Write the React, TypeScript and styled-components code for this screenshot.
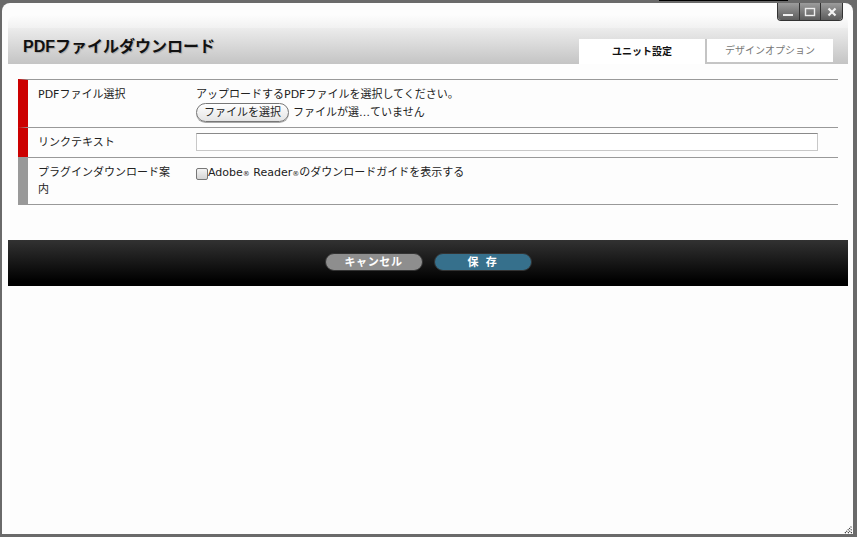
import styled, { createGlobalStyle } from "styled-components";

const GlobalStyle = createGlobalStyle`
  html, body {
    margin: 0;
    padding: 0;
    background: #6a6a6a;
  }
  * {
    box-sizing: border-box;
  }
`;

const Frame = styled.div`
  position: relative;
  width: 857px;
  height: 537px;
  padding: 3px 4px 3px 2px;
  background: #6a6a6a;
  overflow: hidden;
  font-family: "DejaVu Sans", "Noto Sans CJK JP", sans-serif;
  color: #222;
`;

const TopNotch = styled.div`
  position: absolute;
  top: 0;
  left: 659px;
  width: 129px;
  height: 1px;
  background: #000;
`;

const Dialog = styled.div`
  height: 100%;
  padding: 12px 5px 0 6px;
  background: #fdfdfd;
  border-radius: 8px 8px 0 0;
`;

const Sheet = styled.div`
  display: flex;
  flex-direction: column;
`;

const TopFade = styled.div`
  height: 13px;
  background: linear-gradient(#fdfdfd, #f1f1f1);
  border-radius: 8px 8px 0 0;
`;

const Header = styled.header`
  display: flex;
  justify-content: space-between;
  height: 36px;
  background: linear-gradient(#ececec, #c4c4c4);
`;

const Title = styled.h1`
  margin: 0;
  padding: 9px 0 0 15px;
  font-family: "Liberation Sans", "Noto Sans CJK JP", sans-serif;
  font-size: 16px;
  line-height: 20px;
  font-weight: 700;
  color: #111;
  text-shadow: 1px 1px 1px #aaa;
`;

const Tabs = styled.div`
  display: flex;
  align-items: flex-start;
  padding: 11px 15px 0 0;
`;

const Tab = styled.div<{ $active?: boolean }>`
  display: flex;
  align-items: center;
  justify-content: center;
  width: ${({ $active }) => ($active ? "128px" : "126px")};
  height: ${({ $active }) => ($active ? "25px" : "23px")};
  padding-bottom: 2px;
  background: #fff;
  border-right: ${({ $active }) => ($active ? "2px solid #c4c4c4" : "none")};
  font-size: 10px;
  font-weight: ${({ $active }) => ($active ? 700 : 400)};
  color: ${({ $active }) => ($active ? "#111" : "#777")};
`;

const Form = styled.div`
  margin: 15px 10px 0;
  border-bottom: 1px solid #999;
`;

const Row = styled.div<{ $required?: boolean; $height: number }>`
  display: grid;
  grid-template-columns: 158px 1fr;
  height: ${({ $height }) => $height}px;
  padding-left: 10px;
  border-top: 1px solid #999;
  border-left: 10px solid ${({ $required }) => ($required ? "#cc0000" : "#999")};
  font-size: 11px;
  line-height: 18px;
`;

const Label = styled.div`
  padding: 6px 20px 0 0;
  line-height: 17px;
`;

const Value = styled.div`
  display: flex;
  flex-direction: column;
  align-items: flex-start;
  padding-top: 6px;
`;

const FileLine = styled.div`
  display: flex;
  align-items: center;
  gap: 4px;
  margin-top: -1px;
`;

const FileButton = styled.button`
  width: 93px;
  height: 19px;
  padding: 0;
  border: 1px solid #777;
  border-radius: 10px;
  background: linear-gradient(#fff, #e4e4e4);
  box-shadow: 0 1px 0 #aaa;
  font: inherit;
  color: #222;
`;

const TextField = styled.input`
  display: block;
  width: 622px;
  height: 18px;
  margin-top: -1px;
  padding: 0 2px;
  border: 1px solid #c8c8c8;
  border-top-color: #8a8a8a;
  background: #fff;
`;

const CheckLine = styled.label`
  display: flex;
  align-items: center;
`;

const Check = styled.span`
  width: 12px;
  height: 12px;
  border: 1px solid #777;
  border-radius: 2px;
  background: linear-gradient(#f4f4f4, #d4d4d4);
`;

const Mark = styled.span`
  font-size: 7px;
`;

const Footer = styled.footer`
  display: flex;
  justify-content: center;
  align-items: center;
  gap: 11px;
  height: 46px;
  margin-top: 35px;
  padding-bottom: 2px;
  background: linear-gradient(#323232, #000 90%);
`;

const ActionButton = styled.button<{ $primary?: boolean }>`
  width: 98px;
  height: 18px;
  padding: 0;
  border: 1px solid #333;
  border-radius: 9px;
  background: ${({ $primary }) => ($primary ? "#36708c" : "#8e8e8e")};
  color: #fff;
  font-family: "Liberation Sans", "Noto Sans CJK JP", sans-serif;
  font-size: 11px;
  line-height: 16px;
  font-weight: 700;
  letter-spacing: 0.6px;
  word-spacing: 3px;
`;

const WindowControls = styled.div`
  position: absolute;
  top: 3px;
  left: 777px;
  display: flex;
  width: 66px;
  height: 18px;
  border: 1px solid #333;
  border-top: none;
  border-radius: 0 0 4px 4px;
  overflow: hidden;
`;

const WindowButton = styled.div`
  display: flex;
  flex: 1;
  align-items: center;
  justify-content: center;
  background: linear-gradient(#9c9c9c, #5c5c5c);
  border-left: 1px solid #333;

  &:first-child {
    border-left: none;
  }
`;

const Grip = styled.svg`
  position: absolute;
  right: 4px;
  bottom: 3px;
`;

function Minimize() {
  return (
    <svg width="12" height="12" viewBox="0 0 12 12">
      <rect x="1" y="8" width="10" height="2" fill="#eee" />
    </svg>
  );
}

function Maximize() {
  return (
    <svg width="12" height="12" viewBox="0 0 12 12">
      <rect x="1.5" y="2.5" width="9" height="7" fill="none" stroke="#eee" strokeWidth="1.4" />
    </svg>
  );
}

function Close() {
  return (
    <svg width="12" height="12" viewBox="0 0 12 12">
      <path d="M2.5 2.5 L9.5 9.5 M9.5 2.5 L2.5 9.5" stroke="#f2f2f2" strokeWidth="2.2" />
    </svg>
  );
}

export default function App() {
  return (
    <>
      <GlobalStyle />
      <Frame>
        <TopNotch />
        <Dialog>
          <Sheet>
            <TopFade />
            <Header>
              <Title>PDFファイルダウンロード</Title>
              <Tabs>
                <Tab $active>ユニット設定</Tab>
                <Tab>デザインオプション</Tab>
              </Tabs>
            </Header>
            <Form>
              <Row $required $height={48}>
                <Label>PDFファイル選択</Label>
                <Value>
                  アップロードするPDFファイルを選択してください。
                  <FileLine>
                    <FileButton type="button">ファイルを選択</FileButton>
                    ファイルが選…ていません
                  </FileLine>
                </Value>
              </Row>
              <Row $required $height={30}>
                <Label>リンクテキスト</Label>
                <Value>
                  <TextField type="text" />
                </Value>
              </Row>
              <Row $height={47}>
                <Label>プラグインダウンロード案内</Label>
                <Value>
                  <CheckLine>
                    <Check />
                    <span>
                      Adobe<Mark>®</Mark> Reader<Mark>®</Mark>のダウンロードガイドを表示する
                    </span>
                  </CheckLine>
                </Value>
              </Row>
            </Form>
            <Footer>
              <ActionButton type="button">キャンセル</ActionButton>
              <ActionButton type="button" $primary>
                保 存
              </ActionButton>
            </Footer>
          </Sheet>
        </Dialog>
        <WindowControls>
          <WindowButton>
            <Minimize />
          </WindowButton>
          <WindowButton>
            <Maximize />
          </WindowButton>
          <WindowButton>
            <Close />
          </WindowButton>
        </WindowControls>
        <Grip width="9" height="9" viewBox="0 0 9 9">
          <path d="M1 8 L8 1 M4 8 L8 4 M7 8 L8 7" stroke="#222" strokeWidth="1.2" strokeDasharray="1 1" />
        </Grip>
      </Frame>
    </>
  );
}
